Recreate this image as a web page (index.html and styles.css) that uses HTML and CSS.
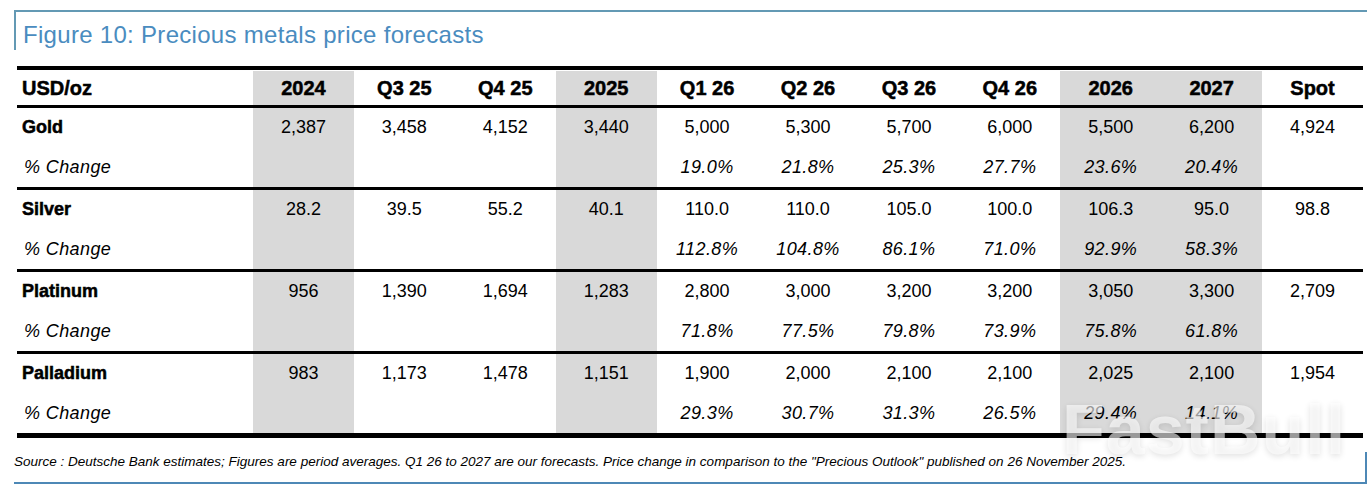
FILE: index.html
```html
<!DOCTYPE html>
<html lang="en">
<head>
<meta charset="utf-8">
<title>Figure 10: Precious metals price forecasts</title>
<link rel="stylesheet" href="styles.css">
</head>
<body>
<div class="figure">
  <div class="fig-head">
    <h1 class="fig-title">Figure 10: Precious metals price forecasts</h1>
  </div>

  <div class="tbl">
    <div class="row head">
      <div class="cell label">USD/oz</div>
      <div class="cell hl">2024</div>
      <div class="cell">Q3 25</div>
      <div class="cell">Q4 25</div>
      <div class="cell hl">2025</div>
      <div class="cell">Q1 26</div>
      <div class="cell">Q2 26</div>
      <div class="cell">Q3 26</div>
      <div class="cell">Q4 26</div>
      <div class="cell hl">2026</div>
      <div class="cell hl">2027</div>
      <div class="cell">Spot</div>
    </div>

    <div class="group">
      <div class="row">
        <div class="cell label metal">Gold</div>
        <div class="cell hl">2,387</div>
        <div class="cell">3,458</div>
        <div class="cell">4,152</div>
        <div class="cell hl">3,440</div>
        <div class="cell">5,000</div>
        <div class="cell">5,300</div>
        <div class="cell">5,700</div>
        <div class="cell">6,000</div>
        <div class="cell hl">5,500</div>
        <div class="cell hl">6,200</div>
        <div class="cell">4,924</div>
      </div>
      <div class="row pct">
        <div class="cell label sub">% Change</div>
        <div class="cell hl"></div>
        <div class="cell"></div>
        <div class="cell"></div>
        <div class="cell hl"></div>
        <div class="cell">19.0%</div>
        <div class="cell">21.8%</div>
        <div class="cell">25.3%</div>
        <div class="cell">27.7%</div>
        <div class="cell hl">23.6%</div>
        <div class="cell hl">20.4%</div>
        <div class="cell"></div>
      </div>
    </div>

    <div class="group">
      <div class="row">
        <div class="cell label metal">Silver</div>
        <div class="cell hl">28.2</div>
        <div class="cell">39.5</div>
        <div class="cell">55.2</div>
        <div class="cell hl">40.1</div>
        <div class="cell">110.0</div>
        <div class="cell">110.0</div>
        <div class="cell">105.0</div>
        <div class="cell">100.0</div>
        <div class="cell hl">106.3</div>
        <div class="cell hl">95.0</div>
        <div class="cell">98.8</div>
      </div>
      <div class="row pct">
        <div class="cell label sub">% Change</div>
        <div class="cell hl"></div>
        <div class="cell"></div>
        <div class="cell"></div>
        <div class="cell hl"></div>
        <div class="cell">112.8%</div>
        <div class="cell">104.8%</div>
        <div class="cell">86.1%</div>
        <div class="cell">71.0%</div>
        <div class="cell hl">92.9%</div>
        <div class="cell hl">58.3%</div>
        <div class="cell"></div>
      </div>
    </div>

    <div class="group">
      <div class="row">
        <div class="cell label metal">Platinum</div>
        <div class="cell hl">956</div>
        <div class="cell">1,390</div>
        <div class="cell">1,694</div>
        <div class="cell hl">1,283</div>
        <div class="cell">2,800</div>
        <div class="cell">3,000</div>
        <div class="cell">3,200</div>
        <div class="cell">3,200</div>
        <div class="cell hl">3,050</div>
        <div class="cell hl">3,300</div>
        <div class="cell">2,709</div>
      </div>
      <div class="row pct">
        <div class="cell label sub">% Change</div>
        <div class="cell hl"></div>
        <div class="cell"></div>
        <div class="cell"></div>
        <div class="cell hl"></div>
        <div class="cell">71.8%</div>
        <div class="cell">77.5%</div>
        <div class="cell">79.8%</div>
        <div class="cell">73.9%</div>
        <div class="cell hl">75.8%</div>
        <div class="cell hl">61.8%</div>
        <div class="cell"></div>
      </div>
    </div>

    <div class="group">
      <div class="row">
        <div class="cell label metal">Palladium</div>
        <div class="cell hl">983</div>
        <div class="cell">1,173</div>
        <div class="cell">1,478</div>
        <div class="cell hl">1,151</div>
        <div class="cell">1,900</div>
        <div class="cell">2,000</div>
        <div class="cell">2,100</div>
        <div class="cell">2,100</div>
        <div class="cell hl">2,025</div>
        <div class="cell hl">2,100</div>
        <div class="cell">1,954</div>
      </div>
      <div class="row pct">
        <div class="cell label sub">% Change</div>
        <div class="cell hl"></div>
        <div class="cell"></div>
        <div class="cell"></div>
        <div class="cell hl"></div>
        <div class="cell">29.3%</div>
        <div class="cell">30.7%</div>
        <div class="cell">31.3%</div>
        <div class="cell">26.5%</div>
        <div class="cell hl">29.4%</div>
        <div class="cell hl">14.1%</div>
        <div class="cell"></div>
      </div>
    </div>
  </div>

  <div class="fig-foot">
    <p class="source">Source : Deutsche Bank estimates; Figures are period averages. Q1 26 to 2027 are our forecasts. Price change in comparison to the "Precious Outlook" published on 26 November 2025.</p>
  </div>

  <div class="watermark">FastBull</div>
</div>
</body>
</html>
```

FILE: styles.css
```css
* {
  box-sizing: border-box;
}

html, body {
  margin: 0;
  padding: 0;
  background: #ffffff;
}

body {
  font-family: "Liberation Sans", Arial, Helvetica, sans-serif;
  color: #000000;
}

.figure {
  position: relative;
  width: 1353px;
  margin-left: 14px;
  padding-top: 10px;
}

.fig-head {
  height: 40px;
  border-top: 2px solid #6399b4;
  border-left: 2px solid #6399b4;
}

.fig-title {
  margin: 0;
  padding: 10px 0 0 7px;
  font-size: 24px;
  line-height: 26px;
  font-weight: 400;
  letter-spacing: 0.3px;
  color: #4a8cbf;
}

.tbl {
  width: 1346px;
  margin: 16px 0 0 3px;
}

.row {
  display: grid;
  grid-template-columns: 236px repeat(11, 1fr);
  height: 39.5px;
  font-size: 18px;
}

.head {
  height: 42px;
  border-top: 4px solid #000;
  border-bottom: 3px solid #000;
  padding-top: 1px;
  font-size: 20px;
  font-weight: 700;
  -webkit-text-stroke: 0.5px #000;
}

.group {
  border-bottom: 3px solid #000;
}

.group:last-child {
  border-bottom-width: 5px;
}

.cell {
  display: flex;
  align-items: center;
  justify-content: center;
  white-space: nowrap;
}

.hl {
  background: #d9d9d9;
}

.label {
  justify-content: flex-start;
  padding-left: 5px;
}

.metal {
  font-weight: 700;
  -webkit-text-stroke: 0.5px #000;
}

.pct .cell {
  font-style: italic;
  letter-spacing: 0.4px;
}

.sub {
  padding-left: 7px;
}

.fig-foot {
  height: 32px;
  margin-top: 14px;
  border-right: 2px solid #4d88b6;
  border-bottom: 2px solid #4d88b6;
}

.source {
  margin: 0;
  padding-top: 2px;
  font-size: 13.5px;
  line-height: 16px;
  font-style: italic;
}

.watermark {
  position: absolute;
  left: 1048px;
  top: 395px;
  font-size: 70px;
  line-height: 70px;
  font-weight: 700;
  letter-spacing: 1px;
  color: rgba(255, 255, 255, 0.6);
  text-shadow: 0 2px 6px rgba(0, 0, 0, 0.12);
  pointer-events: none;
}
```
